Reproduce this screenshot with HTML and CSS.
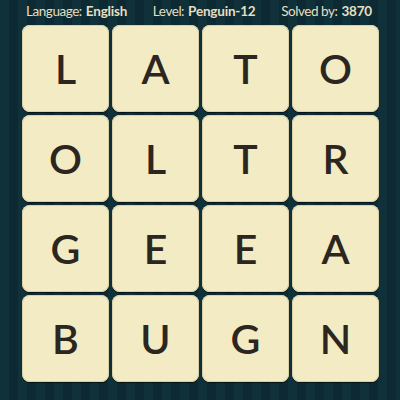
FILE: index.html
```html
<!DOCTYPE html>
<html>
<head>
<meta charset="utf-8">
<link rel="stylesheet" href="styles.css">
</head>
<body>
<div class="page">
  <div class="header">
    <span class="item">Language: <b>English</b></span>
    <span class="item">Level: <b>Penguin-12</b></span>
    <span class="item">Solved by: <b>3870</b></span>
  </div>
  <div class="board">
    <div class="tile">L</div><div class="tile">A</div><div class="tile">T</div><div class="tile">O</div>
    <div class="tile">O</div><div class="tile">L</div><div class="tile">T</div><div class="tile">R</div>
    <div class="tile">G</div><div class="tile">E</div><div class="tile">E</div><div class="tile">A</div>
    <div class="tile">B</div><div class="tile">U</div><div class="tile">G</div><div class="tile">N</div>
  </div>
</div>
</body>
</html>
```
FILE: styles.css
```css
html, body {
  margin: 0;
  padding: 0;
}
body {
  width: 400px;
  height: 400px;
  overflow: hidden;
  background: repeating-linear-gradient(to right, #11313a 0px, #11313a 9px, #0d2a32 9px, #0d2a32 18px);
  font-family: Lato, "Open Sans", sans-serif;
}
.page {
  width: 400px;
  height: 400px;
}
.header {
  display: flex;
  justify-content: space-between;
  padding: 2px 28px 0 26px;
  height: 23px;
  color: #e4dfc0;
  font-size: 13.5px;
  line-height: 18px;
  letter-spacing: -0.45px;
}
.header b {
  font-weight: 700;
  letter-spacing: -0.2px;
  margin-left: 1px;
}
.board {
  display: grid;
  grid-template-columns: repeat(4, 87px);
  grid-auto-rows: 87px;
  gap: 3px;
  margin: 0 0 0 22px;
}
.tile {
  background: #f2ebc4;
  border-radius: 8px;
  box-shadow: inset 0 0 0 1px #d8d0a8, 0 1px 1px rgba(0,0,0,0.6);
  display: flex;
  align-items: center;
  justify-content: center;
  color: #2b2620;
  font-size: 41px;
  font-weight: 600;
  line-height: 1;
}
```
